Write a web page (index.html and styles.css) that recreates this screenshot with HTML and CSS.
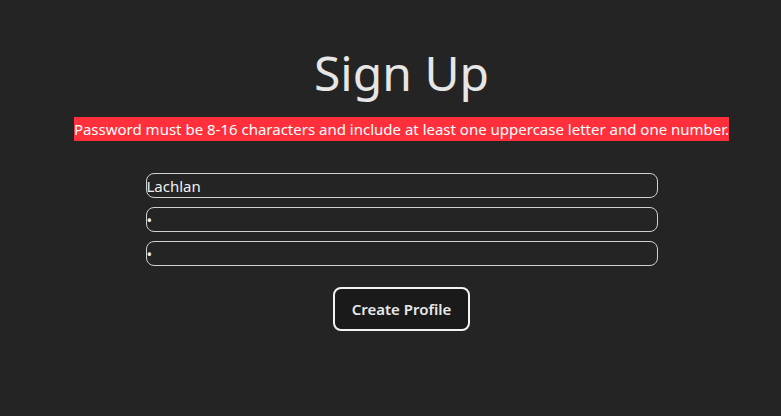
FILE: index.html
```html
<!DOCTYPE html>
<html lang="en">
<head>
<meta charset="utf-8">
<title>Sign Up</title>
<link rel="stylesheet" href="styles.css">
</head>
<body>
<main class="page">
  <h1 class="title">Sign Up</h1>
  <p class="error">Password must be 8-16 characters and include at least one uppercase letter and one number.</p>
  <form class="form">
    <input class="field" type="text" value="Lachlan">
    <input class="field" type="password" value="a">
    <input class="field" type="password" value="a">
    <button class="submit" type="button">Create Profile</button>
  </form>
</main>
</body>
</html>
```
FILE: styles.css
```css
html, body {
  margin: 0;
  padding: 0;
  background: #242424;
  color: rgba(255, 255, 255, 0.87);
  font-family: "Noto Sans", "Open Sans", sans-serif;
}
.page {
  display: flex;
  flex-direction: column;
  align-items: center;
  padding-top: 41px;
  padding-left: 22px;
}
.title {
  margin: 0;
  font-size: 48px;
  font-weight: 400;
  line-height: 64px;
  color: #e6e6e6;
}
.error {
  margin: 12px 0 0;
  background: #ff2f3b;
  color: #fff;
  font-size: 15px;
  line-height: 24px;
  padding: 0;
}
.form {
  margin-top: 32px;
  display: flex;
  flex-direction: column;
  align-items: center;
  gap: 9px;
}
.field {
  box-sizing: border-box;
  width: 512px;
  height: 25px;
  margin: 0;
  padding: 0;
  border: 1px solid #d0d0d0;
  border-radius: 8px;
  background: #242424;
  color: #f0f0f0;
  font-family: inherit;
  font-size: 15px;
  outline: none;
}
.submit {
  margin-top: 12px;
  box-sizing: border-box;
  width: 137px;
  height: 44px;
  border: 2px solid #f2f2f2;
  border-radius: 8px;
  background: #1a1a1a;
  color: #e8e8e8;
  font-family: inherit;
  font-size: 15px;
  font-weight: 600;
  cursor: pointer;
}
```
